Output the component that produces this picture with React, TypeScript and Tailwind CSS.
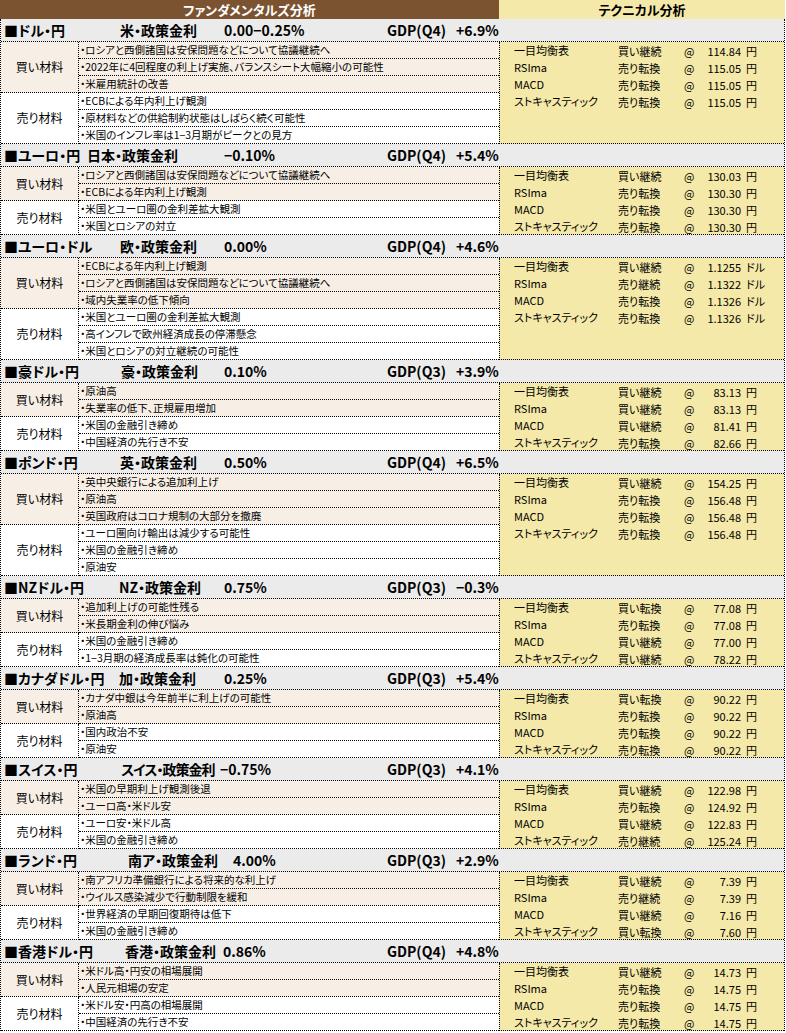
const TECH_NAMES = ['一目均衡表', 'RSIma', 'MACD', 'ストキャスティック'];

type Section = {
  pair: string;
  rate: string;
  value: string;
  gdp: string;
  growth: string;
  pairW: string;
  nameW: string;
  buy: string[];
  sell: string[];
  tech: [string, string][];
  unit: string;
};

const sections: Section[] = [
  {
    pair: '■ドル・円', rate: '米・政策金利', value: '0.00−0.25%', gdp: 'GDP(Q4)', growth: '+6.9%',
    pairW: 'w-[116px]', nameW: 'w-[104px]',
    buy: ['・ロシアと西側諸国は安保問題などについて協議継続へ', '・2022年に4回程度の利上げ実施、バランスシート大幅縮小の可能性', '・米雇用統計の改善'],
    sell: ['・ECBによる年内利上げ観測', '・原材料などの供給制約状態はしばらく続く可能性', '・米国のインフレ率は1−3月期がピークとの見方'],
    tech: [['買い継続', '114.84'], ['売り転換', '115.05'], ['売り転換', '115.05'], ['売り転換', '115.05']],
    unit: '円',
  },
  {
    pair: '■ユーロ・円', rate: '日本・政策金利', value: '−0.10%', gdp: 'GDP(Q4)', growth: '+5.4%',
    pairW: 'w-[83px]', nameW: 'w-[137px]',
    buy: ['・ロシアと西側諸国は安保問題などについて協議継続へ', '・ECBによる年内利上げ観測'],
    sell: ['・米国とユーロ圏の金利差拡大観測', '・米国とロシアの対立'],
    tech: [['買い継続', '130.03'], ['売り転換', '130.30'], ['売り転換', '130.30'], ['売り転換', '130.30']],
    unit: '円',
  },
  {
    pair: '■ユーロ・ドル', rate: '欧・政策金利', value: '0.00%', gdp: 'GDP(Q4)', growth: '+4.6%',
    pairW: 'w-[116px]', nameW: 'w-[104px]',
    buy: ['・ECBによる年内利上げ観測', '・ロシアと西側諸国は安保問題などについて協議継続へ', '・域内失業率の低下傾向'],
    sell: ['・米国とユーロ圏の金利差拡大観測', '・高インフレで欧州経済成長の停滞懸念', '・米国とロシアの対立継続の可能性'],
    tech: [['買い継続', '1.1255'], ['売り継続', '1.1322'], ['売り転換', '1.1326'], ['売り転換', '1.1326']],
    unit: 'ドル',
  },
  {
    pair: '■豪ドル・円', rate: '豪・政策金利', value: '0.10%', gdp: 'GDP(Q3)', growth: '+3.9%',
    pairW: 'w-[117px]', nameW: 'w-[103px]',
    buy: ['・原油高', '・失業率の低下、正規雇用増加'],
    sell: ['・米国の金融引き締め', '・中国経済の先行き不安'],
    tech: [['買い継続', '83.13'], ['買い継続', '83.13'], ['買い継続', '81.41'], ['売り転換', '82.66']],
    unit: '円',
  },
  {
    pair: '■ポンド・円', rate: '英・政策金利', value: '0.50%', gdp: 'GDP(Q4)', growth: '+6.5%',
    pairW: 'w-[116px]', nameW: 'w-[104px]',
    buy: ['・英中央銀行による追加利上げ', '・原油高', '・英国政府はコロナ規制の大部分を撤廃'],
    sell: ['・ユーロ圏向け輸出は減少する可能性', '・米国の金融引き締め', '・原油安'],
    tech: [['買い継続', '154.25'], ['売り転換', '156.48'], ['売り転換', '156.48'], ['売り転換', '156.48']],
    unit: '円',
  },
  {
    pair: '■NZドル・円', rate: 'NZ・政策金利', value: '0.75%', gdp: 'GDP(Q3)', growth: '−0.3%',
    pairW: 'w-[115px]', nameW: 'w-[105px]',
    buy: ['・追加利上げの可能性残る', '・米長期金利の伸び悩み'],
    sell: ['・米国の金融引き締め', '・1−3月期の経済成長率は鈍化の可能性'],
    tech: [['買い転換', '77.08'], ['売り転換', '77.08'], ['買い継続', '77.00'], ['買い継続', '78.22']],
    unit: '円',
  },
  {
    pair: '■カナダドル・円', rate: '加・政策金利', value: '0.25%', gdp: 'GDP(Q3)', growth: '+5.4%',
    pairW: 'w-[115px]', nameW: 'w-[105px]',
    buy: ['・カナダ中銀は今年前半に利上げの可能性', '・原油高'],
    sell: ['・国内政治不安', '・原油安'],
    tech: [['買い転換', '90.22'], ['売り転換', '90.22'], ['売り転換', '90.22'], ['売り転換', '90.22']],
    unit: '円',
  },
  {
    pair: '■スイス・円', rate: 'スイス・政策金利', value: '−0.75%', gdp: 'GDP(Q3)', growth: '+4.1%',
    pairW: 'w-[117px]', nameW: 'w-[99px] tracking-[-1px]',
    buy: ['・米国の早期利上げ観測後退', '・ユーロ高・米ドル安'],
    sell: ['・ユーロ安・米ドル高', '・米国の金融引き締め'],
    tech: [['買い継続', '122.98'], ['売り転換', '124.92'], ['買い継続', '122.83'], ['売り継続', '125.24']],
    unit: '円',
  },
  {
    pair: '■ランド・円', rate: '南ア・政策金利', value: '4.00%', gdp: 'GDP(Q3)', growth: '+2.9%',
    pairW: 'w-[124px]', nameW: 'w-[105px]',
    buy: ['・南アフリカ準備銀行による将来的な利上げ', '・ウイルス感染減少で行動制限を緩和'],
    sell: ['・世界経済の早期回復期待は低下', '・米国の金融引き締め'],
    tech: [['買い継続', '7.39'], ['売り継続', '7.39'], ['買い継続', '7.16'], ['買い転換', '7.60']],
    unit: '円',
  },
  {
    pair: '■香港ドル・円', rate: '香港・政策金利', value: '0.86%', gdp: 'GDP(Q4)', growth: '+4.8%',
    pairW: 'w-[121px]', nameW: 'w-[98px]',
    buy: ['・米ドル高・円安の相場展開', '・人民元相場の安定'],
    sell: ['・米ドル安・円高の相場展開', '・中国経済の先行き不安'],
    tech: [['買い継続', '14.73'], ['売り転換', '14.75'], ['売り転換', '14.75'], ['売り転換', '14.75']],
    unit: '円',
  },
];

function Group({ label, items, buy }: { label: string; items: string[]; buy: boolean }) {
  return (
    <div className={`flex ${buy ? 'bg-[#f7efe6]' : 'bg-white'}`}>
      <div className="w-[78px] shrink-0 flex items-center justify-center border-r border-b border-dotted border-black text-[12px]">
        {label}
      </div>
      <div className="flex-1 min-w-0">
        {items.map((t, i) => (
          <div key={i} className="h-[17px] flex items-center pl-px border-b border-dotted border-black text-[10.5px] whitespace-nowrap overflow-hidden">
            {t}
          </div>
        ))}
      </div>
    </div>
  );
}

function Block({ s }: { s: Section }) {
  return (
    <div>
      {/* currency header */}
      <div className="h-[23px] flex items-center pl-[3px] bg-[#ebebeb] border-b border-dotted border-black text-[14px] font-bold whitespace-nowrap">
        <div className="w-[383px] flex items-center shrink-0">
          <span className={`${s.pairW} shrink-0`}>{s.pair}</span>
          <span className={`${s.nameW} shrink-0`}>{s.rate}</span>
          <span>{s.value}</span>
        </div>
        <span className="w-[69px] shrink-0">{s.gdp}</span>
        <span>{s.growth}</span>
      </div>
      <div className="flex">
        <div className="w-[498px] shrink-0">
          <Group label="買い材料" items={s.buy} buy />
          <Group label="売り材料" items={s.sell} buy={false} />
        </div>
        <div className="flex-1 bg-[#f4e9a8] border-l border-b border-dotted border-black pl-[14px] text-[11px]">
          {s.tech.map(([sig, price], i) => (
            <div key={i} className="h-[17px] last:h-[16px] flex items-center whitespace-nowrap">
              <span className="w-[104px] shrink-0">{TECH_NAMES[i]}</span>
              <span className="w-[66px] shrink-0 pt-[2px]">{sig}</span>
              <span className="w-[14px] shrink-0 pt-[2px]">@</span>
              <span className="w-[43px] shrink-0 text-right pt-[2px]">{price}</span>
              <span className="ml-[5px] pt-[2px]">{s.unit}</span>
            </div>
          ))}
        </div>
      </div>
    </div>
  );
}

export default function App() {
  return (
    <div className="w-[786px] bg-white text-black font-['Noto_Sans_CJK_JP',sans-serif] [font-feature-settings:'palt'] leading-none">
      <div className="w-[785px] flex h-[19px] text-[13px] font-bold">
        <div className="w-[499px] bg-[#7c5331] text-white flex items-center justify-center">ファンダメンタルズ分析</div>
        <div className="flex-1 bg-[#f4e9a8] flex items-center justify-center">テクニカル分析</div>
      </div>
      <div className="w-[785px] border-x border-dotted border-black">
        {sections.map((s) => (
          <Block key={s.pair} s={s} />
        ))}
      </div>
    </div>
  );
}
